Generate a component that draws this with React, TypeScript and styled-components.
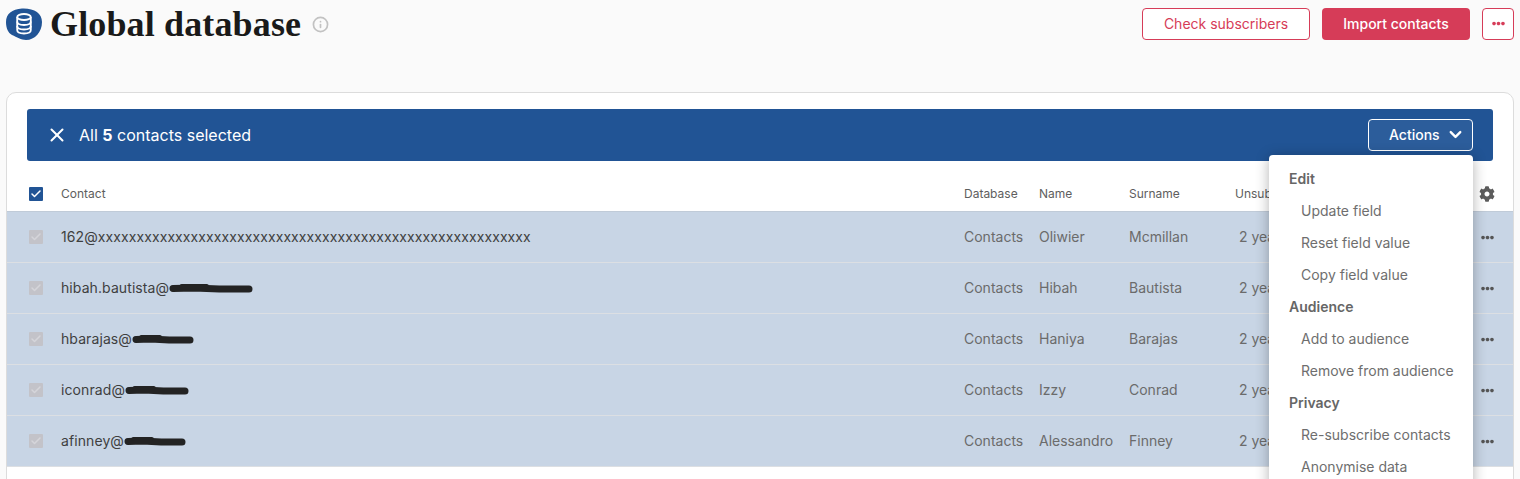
import styled, { createGlobalStyle } from "styled-components";
import { Check, ChevronDown, Info, X } from "lucide-react";
import { FaCog, FaEllipsisH } from "react-icons/fa";

const contacts = [
  { user: "162@xxxxxxxxxxxxxxxxxxxxxxxxxxxxxxxxxxxxxxxxxxxxxxxxxxxxxxxx", scribble: 0, name: "Oliwier", surname: "Mcmillan" },
  { user: "hibah.bautista@", scribble: 84, name: "Hibah", surname: "Bautista" },
  { user: "hbarajas@", scribble: 62, name: "Haniya", surname: "Barajas" },
  { user: "iconrad@", scribble: 64, name: "Izzy", surname: "Conrad" },
  { user: "afinney@", scribble: 62, name: "Alessandro", surname: "Finney" },
];

const menu = [
  { title: "Edit", items: ["Update field", "Reset field value", "Copy field value"] },
  { title: "Audience", items: ["Add to audience", "Remove from audience"] },
  { title: "Privacy", items: ["Re-subscribe contacts", "Anonymise data"] },
];

// the email domains are inked out by hand in the screenshot
function Scribble({ width }: { width: number }) {
  return (
    <ScribbleMark width={width} height={12} viewBox={`0 0 ${width} 12`}>
      <path
        d={`M4 6.500 L${width * 0.3} 6 L${width * 0.6} 7 L${width - 4} 7`}
        fill="none"
        stroke="#232323"
        strokeWidth="7"
        strokeLinecap="round"
        strokeLinejoin="round"
      />
      <path d={`M${width * 0.15} 4 L${width * 0.45} 4`} fill="none" stroke="#232323" strokeWidth="4" strokeLinecap="round" />
    </ScribbleMark>
  );
}

export default function App() {
  return (
    <>
      <GlobalStyle />
      <Page>
        <Header>
          <TitleGroup>
            <Blob>
              <svg width="36" height="32" viewBox="0 0 36 32">
                <path d="M0 14C0 6 6 1 16 0.500C28 0 36 5 36 14C36 24 29 32 20 32C15 32 11 29 6 27C2 25 0 20 0 14Z" fill="#215495" />
                <g fill="none" stroke="#fff" strokeWidth="1.800">
                  <ellipse cx="18" cy="9" rx="6.800" ry="3" />
                  <path d="M11.200 9V22C11.200 24 14 25.500 18 25.500C22 25.500 24.800 24 24.800 22V9" />
                  <path d="M11.200 13.500C11.200 15.500 14 17 18 17C22 17 24.800 15.500 24.800 13.500" />
                  <path d="M11.200 18C11.200 20 14 21.500 18 21.500C22 21.500 24.800 20 24.800 18" />
                </g>
              </svg>
            </Blob>
            <Title>Global database</Title>
            <Info size={17} color="#c2c2c2" strokeWidth={2.4} />
          </TitleGroup>
          <HeaderActions>
            <OutlineButton $wide>Check subscribers</OutlineButton>
            <PrimaryButton>Import contacts</PrimaryButton>
            <OutlineButton>
              <FaEllipsisH size={13} />
            </OutlineButton>
          </HeaderActions>
        </Header>

        <Card>
          <SelectionBar>
            <SelectionText>
              <X size={22} color="#fff" strokeWidth={2.2} />
              <span>
                All <strong>5</strong> contacts selected
              </span>
            </SelectionText>
            <ActionsAnchor>
              <ActionsButton>
                Actions
                <ChevronDown size={19} strokeWidth={3} />
              </ActionsButton>
              <Menu>
                {menu.map((group) => (
                  <div key={group.title}>
                    <MenuTitle>{group.title}</MenuTitle>
                    {group.items.map((item) => (
                      <MenuItem key={item}>{item}</MenuItem>
                    ))}
                  </div>
                ))}
              </Menu>
            </ActionsAnchor>
          </SelectionBar>

          <HeadRow>
            <Box $checked>
              <Check size={12} color="#fff" strokeWidth={3} />
            </Box>
            <span>Contact</span>
            <span>Database</span>
            <span>Name</span>
            <span>Surname</span>
            <HeadClipped>Unsubscribed</HeadClipped>
            <GearCell>
              <FaCog size={16} color="#5c5c5c" />
            </GearCell>
          </HeadRow>

          {contacts.map((c) => (
            <Row key={c.name}>
              <Box>
                <Check size={12} color="#d5d5da" strokeWidth={3} />
              </Box>
              <Email>
                {c.user}
                {c.scribble > 0 && <Scribble width={c.scribble} />}
              </Email>
              <Cell>Contacts</Cell>
              <Cell>{c.name}</Cell>
              <Cell>{c.surname}</Cell>
              <Age>2 years ago</Age>
              <DotsCell>
                <FaEllipsisH size={13} color="#555" />
              </DotsCell>
            </Row>
          ))}
        </Card>
      </Page>
    </>
  );
}

const GlobalStyle = createGlobalStyle`
  html, body {
    margin: 0;
    height: 479px;
    overflow: hidden;
    background: #fafafa;
    font-family: Inter, "Noto Sans", sans-serif;
  }
`;

const Page = styled.div`
  height: 479px;
  overflow: hidden;
  padding: 0 6px;
  box-sizing: border-box;
`;

const Header = styled.header`
  height: 92px;
  display: flex;
  justify-content: space-between;
  align-items: flex-start;
`;

const TitleGroup = styled.div`
  display: flex;
  align-items: center;
  height: 48px;
  svg {
    display: block;
  }
`;

const Blob = styled.div`
  width: 36px;
  height: 32px;
  margin-right: 8px;
`;

const Title = styled.h1`
  margin: 0 11px 0 0;
  font: bold 36px/46px "Liberation Serif", serif;
  letter-spacing: 0.14px;
  color: #1a1a1a;
`;

const HeaderActions = styled.div`
  display: flex;
  gap: 12px;
  padding-top: 8px;
`;

const OutlineButton = styled.button<{ $wide?: boolean }>`
  width: ${({ $wide }) => ($wide ? "168px" : "32px")};
  height: 32px;
  padding: 0 0 2px;
  box-sizing: border-box;
  display: flex;
  align-items: center;
  justify-content: center;
  background: #fff;
  border: 1px solid #d63c58;
  border-radius: 4px;
  color: #d63c58;
  font: 400 14px Inter, sans-serif;
`;

const PrimaryButton = styled.button`
  width: 148px;
  height: 32px;
  padding: 0 0 2px;
  background: #d63c58;
  border: 0;
  border-radius: 4px;
  color: #fff;
  font: 500 14px Inter, sans-serif;
`;

const Card = styled.section`
  height: 420px;
  box-sizing: border-box;
  background: #fff;
  border: 1px solid #dcdcdc;
  border-radius: 10px;
  padding-top: 16px;
`;

const SelectionBar = styled.div`
  height: 52px;
  margin: 0 20px;
  padding: 0 20px 0 19px;
  display: flex;
  align-items: center;
  justify-content: space-between;
  background: #215495;
  border-radius: 3px;
  color: #fff;
`;

const SelectionText = styled.div`
  display: flex;
  align-items: center;
  gap: 11px;
  font-size: 16px;
  strong {
    font-weight: 700;
  }
`;

const ActionsAnchor = styled.div`
  position: relative;
`;

const ActionsButton = styled.button`
  width: 105px;
  height: 32px;
  padding: 0 0 1px 20px;
  box-sizing: border-box;
  display: flex;
  align-items: center;
  gap: 6px;
  background: #2c5d9b;
  border: 1px solid #fff;
  border-radius: 4px;
  color: #fff;
  font: 500 14px Inter, sans-serif;
`;

const Menu = styled.div`
  position: absolute;
  z-index: 2;
  top: 36px;
  right: 0;
  width: 204px;
  box-sizing: border-box;
  padding: 8px 0;
  background: #fff;
  border-radius: 4px;
  box-shadow: 0 2px 14px rgba(0, 0, 0, 0.3);
`;

const MenuTitle = styled.div`
  height: 32px;
  line-height: 32px;
  padding-left: 20px;
  font-size: 14px;
  font-weight: 600;
  color: #666;
`;

const MenuItem = styled.div`
  height: 32px;
  line-height: 32px;
  padding-left: 32px;
  font-size: 14px;
  color: #6e6e6e;
  white-space: nowrap;
`;

const columns = "54px 903px 75px 90px 106px 226px 52px";

const HeadRow = styled.div`
  height: 51px;
  box-sizing: border-box;
  padding-top: 15px;
  display: grid;
  grid-template-columns: ${columns};
  align-items: center;
  border-bottom: 1px solid #c0cbd8;
  font-size: 12px;
  color: #5e5e5e;
  white-space: nowrap;
`;

const HeadClipped = styled.span`
  overflow: hidden;
`;

const Row = styled.div`
  height: 51px;
  box-sizing: border-box;
  display: grid;
  grid-template-columns: ${columns};
  align-items: center;
  background: #c8d5e5;
  border-bottom: 1px solid #dcdfe3;
  font-size: 14px;
  color: #6b6b6b;
  white-space: nowrap;
`;

const Box = styled.span<{ $checked?: boolean }>`
  width: 14px;
  height: 14px;
  margin-left: 22px;
  display: flex;
  align-items: center;
  justify-content: center;
  border-radius: 1px;
  background: ${({ $checked }) => ($checked ? "#215495" : "#c3c3c9")};
`;

const Email = styled.span`
  display: flex;
  align-items: center;
  margin-bottom: 2px;
  color: #3f3f3f;
  letter-spacing: 0.09px;
`;

const ScribbleMark = styled.svg`
  margin-top: 2px;
  flex: none;
`;

const Cell = styled.span`
  overflow: hidden;
  margin-bottom: 2px;
`;

const Age = styled.span`
  padding-left: 4px;
  margin-bottom: 2px;
`;

const GearCell = styled.span`
  display: flex;
  justify-content: center;
`;

const DotsCell = styled.span`
  display: flex;
  justify-content: center;
`;
